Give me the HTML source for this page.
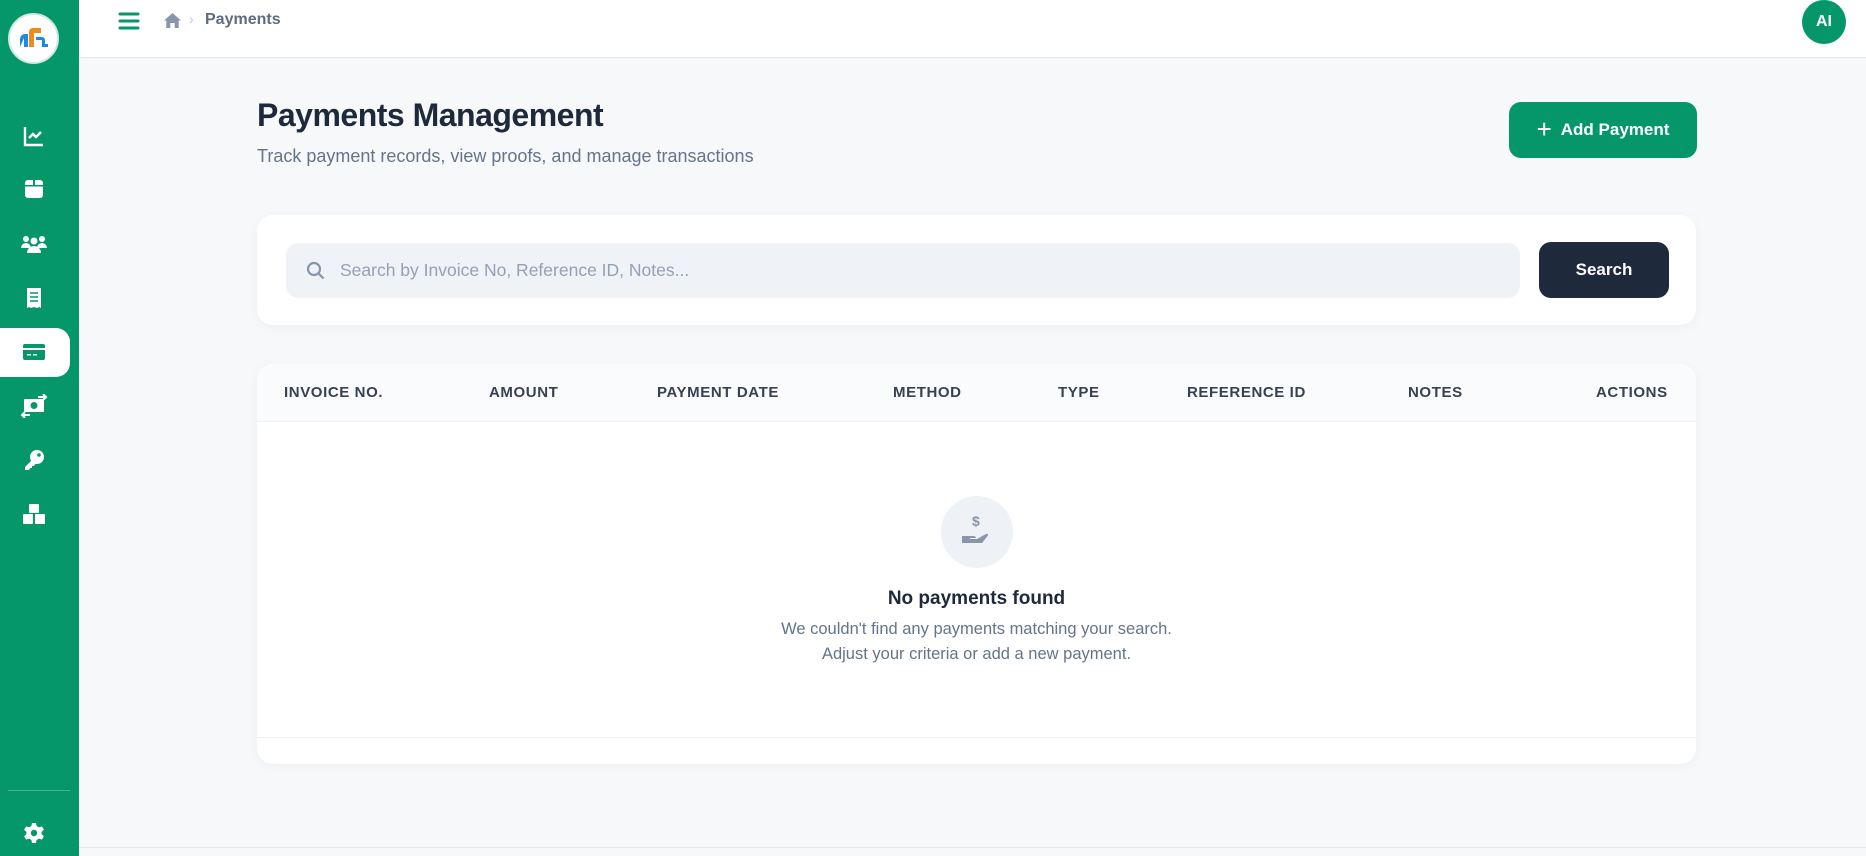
<!DOCTYPE html>
<html><head><meta charset="utf-8"><style>
*{box-sizing:border-box;margin:0;padding:0}
body{width:1866px;height:856px;overflow:hidden;background:#f7f8fa;font-family:"Liberation Sans",sans-serif;position:relative}
.sb{position:absolute;left:0;top:0;width:79px;height:856px;background:#059669}
.logo{position:absolute;left:8px;top:13px;width:51px;height:51px;border-radius:50%;background:#fff;border:2px solid #cde8dc}
.ic{position:absolute;left:22px;width:24px;height:24px}
.act{position:absolute;left:0;top:328px;width:70px;height:49px;background:#fff;border-radius:0 14px 14px 0}
.hdr{position:absolute;left:79px;top:0;right:0;height:58px;background:#fff;border-bottom:1px solid #e5e7eb}
.card{position:absolute;background:#fff;border-radius:16px;box-shadow:0 2px 12px rgba(0,0,0,.04)}
.th{position:absolute;top:384px;font-size:15px;font-weight:bold;color:#374151;letter-spacing:.6px}
</style></head><body>
<div class="sb">
 <div class="logo"><svg width="47" height="47" viewBox="0 0 47 47"><path d="M10 32v-8a5 5 0 0 1 5-5h3v13h-4v-9" fill="#1e88e5"/><path d="M19 32V17a4 4 0 0 1 4-4h8v5h-7v14z" fill="#f08a1c"/><path d="M26 22h6a3 3 0 0 1 3 3v4h3v3h-6v-7h-6z" fill="#1e88e5"/></svg></div>
 <svg class="ic" style="top:124px" viewBox="0 0 24 24" fill="none" stroke="#fff" stroke-width="2.4"><path d="M3 3v18h18M7 14l4-4 3 3 5-5"/></svg>
 <svg class="ic" style="top:177px" viewBox="0 0 24 24" fill="#fff"><rect x="3" y="3" width="18" height="18" rx="3"/><rect x="3" y="8" width="18" height="1.5" fill="#059669"/><rect x="11" y="3" width="2" height="6" fill="#059669"/></svg>
 <svg class="ic" style="top:232px;left:20px;width:28px" viewBox="0 0 28 24" fill="#fff"><circle cx="6" cy="7" r="3"/><circle cx="22" cy="7" r="3"/><circle cx="14" cy="9" r="3.5"/><path d="M1 16a5 5 0 0 1 10 0zM17 16a5 5 0 0 1 10 0zM7 21a7 7 0 0 1 14 0z"/></svg>
 <svg class="ic" style="top:286px" viewBox="0 0 24 24" fill="#fff"><path d="M5 2h14v20l-2-1-2 1-3-1-3 1-2-1-2 1z"/><path d="M8 7h8M8 11h8M8 15h8" stroke="#059669" stroke-width="1.6"/></svg>
 <div class="act"></div>
 <svg class="ic" style="top:340px" viewBox="0 0 24 24" fill="#059669"><rect x="1" y="4" width="22" height="16" rx="2"/><rect x="1" y="8" width="22" height="2" fill="#fff"/><rect x="5" y="14" width="4" height="1.5" fill="#fff"/><rect x="11" y="14" width="4" height="1.5" fill="#fff"/></svg>
 <svg class="ic" style="top:394px;left:20px;width:28px" viewBox="0 0 28 24" fill="#fff"><rect x="4" y="5" width="20" height="13" rx="1"/><circle cx="14" cy="11.5" r="3.5" fill="#059669"/><path d="M18 3h8M23 0l3 3-3 3M10 21H2M5 18l-3 3 3 3" stroke="#fff" stroke-width="2" fill="none"/></svg>
 <svg class="ic" style="top:448px" viewBox="0 0 24 24" fill="#fff"><circle cx="15" cy="9" r="7"/><path d="M10 12 3 19v3h4l1-2h2v-2h2l2-3z"/><circle cx="17" cy="7" r="1.8" fill="#059669"/></svg>
 <svg class="ic" style="top:502px" viewBox="0 0 24 24" fill="#fff"><rect x="7" y="2" width="10" height="9" rx="1"/><rect x="1" y="12" width="10" height="10" rx="1"/><rect x="13" y="12" width="10" height="10" rx="1"/></svg>
 <div style="position:absolute;left:8px;top:790px;width:62px;height:1px;background:rgba(255,255,255,.25)"></div>
 <svg class="ic" style="top:821px" viewBox="0 0 24 24" fill="#fff"><path d="M10 2h4l.6 3 2.4 1.4 2.9-1 2 3.4-2.3 2v2.4l2.3 2-2 3.4-2.9-1L14.6 19 14 22h-4l-.6-3L7 17.6l-2.9 1-2-3.4 2.3-2v-2.4l-2.3-2 2-3.4 2.9 1L9.4 5z"/><circle cx="12" cy="12" r="3.2" fill="#059669"/></svg>
</div>
<div class="hdr">
 <svg style="position:absolute;left:39px;top:11px" width="22" height="20" viewBox="0 0 22 20" stroke="#059669" stroke-width="3" stroke-linecap="round"><path d="M2 3h18M2 10h18M2 17h18"/></svg>
 <svg style="position:absolute;left:85px;top:13px" width="17" height="15" viewBox="0 0 17 15" fill="#8896ab"><path d="M8.5 0 0 7.5h2.3V15h4v-5h4.4v5h4V7.5H17z"/></svg>
 <span style="position:absolute;left:110px;top:11px;color:#c0c6d0;font-size:14px">›</span>
 <span style="position:absolute;left:126px;top:11px;color:#5f6b7e;font-size:16px;font-weight:bold">Payments</span>
 <div style="position:absolute;left:1723px;top:0;width:44px;height:44px;border-radius:50%;background:#059669;color:#fff;font-weight:bold;font-size:16px;text-align:center;line-height:44px">AI</div>
</div>
<div style="position:absolute;left:257px;top:97px;font-size:32px;font-weight:bold;color:#1e293b;letter-spacing:-.5px">Payments Management</div>
<div style="position:absolute;left:257px;top:146px;font-size:18px;color:#64748b">Track payment records, view proofs, and manage transactions</div>
<div style="position:absolute;left:1509px;top:102px;width:188px;height:56px;border-radius:12px;background:#059669;color:#fff;font-weight:bold;font-size:17px;display:flex;align-items:center;justify-content:center;gap:9px"><span style="font-size:26px;font-weight:normal;line-height:1;margin-top:-3px">+</span>Add Payment</div>
<div class="card" style="left:257px;top:215px;width:1439px;height:110px">
 <div style="position:absolute;left:29px;top:28px;width:1234px;height:55px;border-radius:12px;background:#eff3f8">
  <svg style="position:absolute;left:20px;top:18px" width="19" height="19" viewBox="0 0 19 19" fill="none" stroke="#8896ab" stroke-width="2.2"><circle cx="8" cy="8" r="6"/><path d="m12.5 12.5 5 5"/></svg>
  <span style="position:absolute;left:54px;top:17px;font-size:17.5px;color:#94a0b3">Search by Invoice No, Reference ID, Notes...</span>
 </div>
 <div style="position:absolute;left:1282px;top:27px;width:130px;height:56px;border-radius:12px;background:#1e293b;color:#fff;font-weight:bold;font-size:17px;text-align:center;line-height:56px">Search</div>
</div>
<div class="card" style="left:257px;top:364px;width:1439px;height:400px">
 <div style="position:absolute;left:0;top:0;right:0;height:58px;background:#fafbfc;border-radius:16px 16px 0 0;border-bottom:1px solid #eef0f3"></div>
 <div style="position:absolute;left:0;right:0;top:373px;height:1px;background:#eef0f3"></div>
 <div style="position:absolute;left:684px;top:132px;width:72px;height:72px;border-radius:50%;background:#eef2f7">
  <svg style="position:absolute;left:20px;top:18px" width="32" height="34" viewBox="0 0 32 34" fill="#8896ab"><text x="11" y="12" font-family="Liberation Sans" font-weight="bold" font-size="14">$</text><path d="M1 22h6l5 0c2 0 3 1 3 2h-6v1h7l9-5c1.5-.7 2.8.7 1.5 2L21 29H1z"/></svg>
 </div>
 <div style="position:absolute;left:0;right:0;top:224px;text-align:center;font-size:19px;font-weight:bold;color:#1e293b">No payments found</div>
 <div style="position:absolute;left:0;right:0;top:253px;text-align:center;font-size:16.5px;color:#64748b;line-height:25px">We couldn't find any payments matching your search.<br>Adjust your criteria or add a new payment.</div>
</div>
<div class="th" style="left:284px">INVOICE NO.</div>
<div class="th" style="left:489px">AMOUNT</div>
<div class="th" style="left:657px">PAYMENT DATE</div>
<div class="th" style="left:893px">METHOD</div>
<div class="th" style="left:1058px">TYPE</div>
<div class="th" style="left:1187px">REFERENCE ID</div>
<div class="th" style="left:1408px">NOTES</div>
<div class="th" style="left:1596px">ACTIONS</div>
<div style="position:absolute;left:79px;right:0;top:847px;height:1px;background:#e5e7eb"></div>
</body></html>
